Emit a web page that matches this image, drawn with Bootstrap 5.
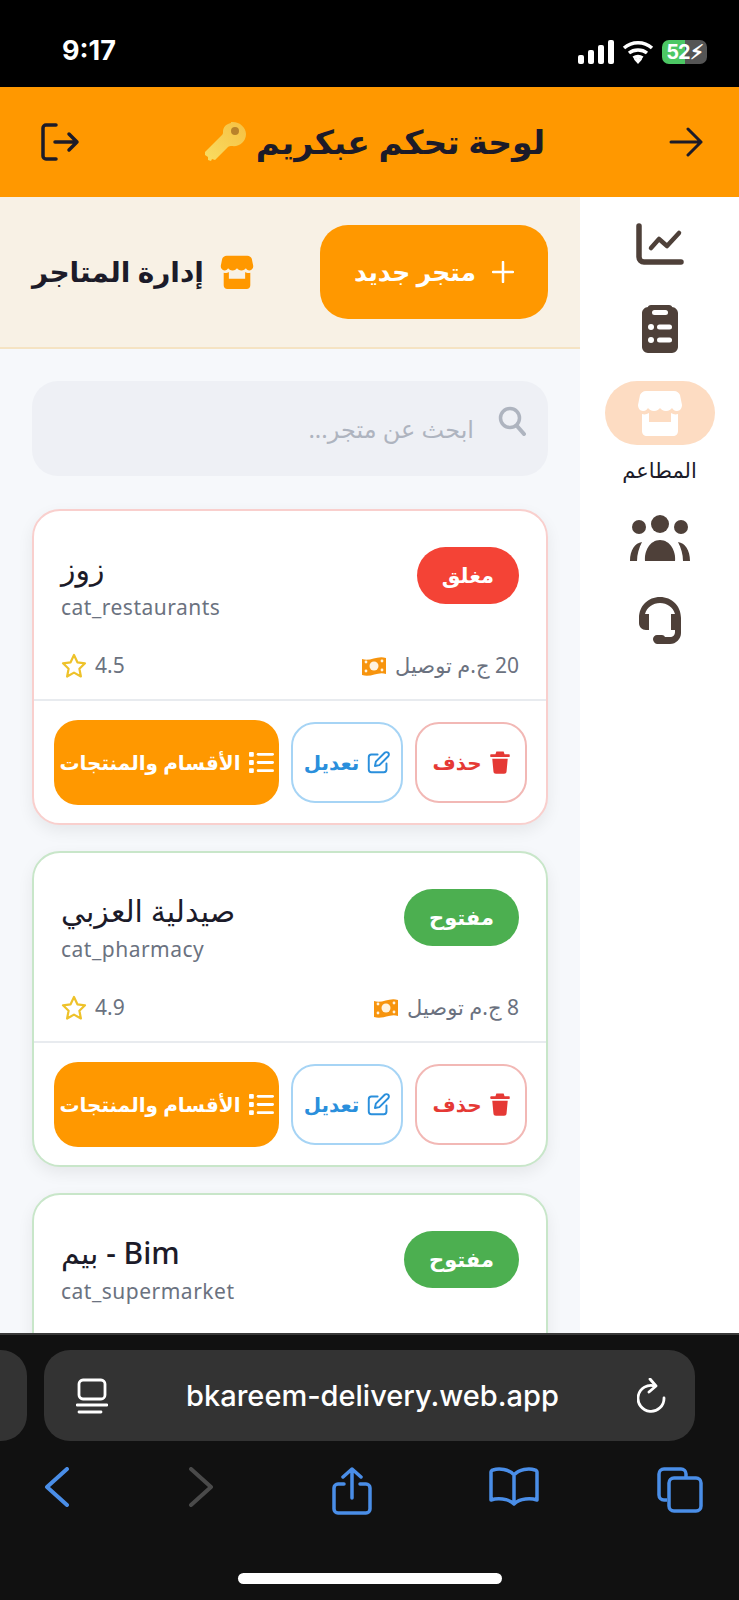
<!DOCTYPE html>
<html lang="ar" dir="rtl">
<head>
    <meta charset="UTF-8">
    <meta name="viewport" content="width=device-width, initial-scale=1.0">
    <title>لوحة تحكم عبكريم</title>
    <link href="https://cdn.jsdelivr.net/npm/bootstrap@5.3.0/dist/css/bootstrap.min.css" rel="stylesheet">
    <style>
        body {
            font-family: "Noto Sans", "DejaVu Sans", sans-serif;
            background: #000;
            color: #1c1b29;
        }
        .phone { width: 739px; height: 1600px; overflow: hidden; }
        .status-bar { height: 87px; background: #000; color: #fff; padding: 0 32px 0 62px; }
        .status-time { font-family: Inter, sans-serif; font-weight: 700; font-size: 27px; }
        .battery { width: 45px; height: 24px; border-radius: 7px; background: linear-gradient(90deg, #4cc764 52%, #555 52%); font: 700 20px/24px Inter, sans-serif; text-align: center; color: #fff; letter-spacing: -1px; }
        .top-bar { height: 110px; background: #ff9800; padding: 0 36px 0 40px; }
        .top-title { font-size: 33px; font-weight: 700; margin: 0; }
        .app-body { height: 1136px; background: #fff; }
        .side-rail { width: 159px; padding-top: 26px; }
        .rail-item { height: 42px; margin-bottom: 40px; color: #4e4039; }
        .rail-pill { width: 110px; height: 64px; border-radius: 32px; background: #fddcc2; color: #fff; }
        .rail-label { font-size: 21px; color: #1c1b29; margin-top: 10px; line-height: 30px; }
        .rail-active { margin-top: -6px; margin-bottom: 30px; height: auto; }
        .store-pane { background: #f6f8fb; overflow: hidden; }
        .store-head { height: 152px; background: #f8f1e5; border-bottom: 2px solid #f5e3c3; padding: 0 32px; }
        .add-btn { width: 228px; height: 94px; border-radius: 28px; background: #ff9800; color: #fff; font-size: 25px; font-weight: 700; border: 0; }
        .store-title { font-size: 28px; font-weight: 700; margin: 0; }
        .search-box { height: 95px; margin: 32px 32px 33px; background: #eef0f5; border-radius: 26px; padding: 0 22px; color: #aeb4bf; font-size: 24px; }
        .store-card { margin: 0 32px 26px; border-radius: 28px; border: 2px solid #c8e6c9; background: #fff; box-shadow: 0 6px 16px rgba(0, 0, 0, .07); flex-shrink: 0; }
        .store-card.closed { border-color: #f9cfcd; }
        .card-top { padding: 36px 27px 0; height: 188px; }
        .state-pill { height: 57px; border-radius: 29px; color: #fff; font-size: 21px; font-weight: 600; padding: 0 25px; }
        .state-open { background: #4caf50; }
        .state-closed { background: #f44336; }
        .store-name { font-size: 30px; line-height: 44px; margin: 0; }
        .store-cat { font-size: 21px; color: #6b7280; letter-spacing: .5px; line-height: 32px; }
        .meta-row { color: #6b7280; font-size: 21px; margin-top: 27px; }
        .card-actions { border-top: 2px solid #e8ebef; padding: 21px 19px 20px; gap: 12px; }
        .act-btn { height: 81px; width: 112px; border-radius: 24px; background: #fff; font-size: 20px; font-weight: 700; padding: 0; }
        .act-del { border: 2px solid #f2b8b5; color: #e53935; }
        .act-edit { border: 2px solid #a6d4f5; color: #2a8fdc; width: 112px; }
        .act-cats { border: 0; background: #ff9800; color: #fff; width: 225px; height: 85px; margin-top: -2px; margin-bottom: -2px; }
        .browser-bar { height: 267px; background: #111; border-top: 2px solid #3a3a3a; color: #fff; }
        .url-row { padding-top: 15px; gap: 17px; }
        .url-stub { width: 27px; height: 91px; background: #333; border-radius: 0 26px 26px 0; }
        .url-box { width: 651px; height: 91px; background: #333; border-radius: 26px; padding: 0 28px 0 32px; font-family: Inter, sans-serif; font-size: 29px; font-weight: 500; }
        .nav-icons { padding: 26px 36px 0 44px; height: 100px; }
        .home-line { width: 264px; height: 11px; border-radius: 6px; background: #fff; margin: 32px auto 0; }
    </style>
</head>
<body>
    <svg width="0" height="0" class="d-block">
        <symbol id="i-store" viewBox="0 0 44 46"><path fill="currentColor" d="M8 1h28c3 0 5 2 6 4l2 10c0 3-2 6-5 6s-4-2-5-3c-1 1-3 3-6 3s-5-2-6-3c-1 1-3 3-6 3s-5-2-6-3c-1 1-2 3-5 3s-5-3-5-6L2 5c1-2 3-4 6-4z"/><path fill="currentColor" d="M4 24c3 1 5 0 7-1v9h22v-9c2 1 4 2 7 1v17c0 3-2 5-5 5H9c-3 0-5-2-5-5z"/></symbol>
        <symbol id="i-star" viewBox="0 0 26 26"><path fill="none" stroke="#eec22a" stroke-width="2.2" stroke-linejoin="round" d="M13 2l3.4 7.3 7.6 1-5.6 5.4 1.5 7.8-6.9-3.9-6.9 3.9 1.5-7.8L2 10.3l7.6-1z"/></symbol>
        <symbol id="i-money" viewBox="0 0 26 22"><path fill="#f7940d" d="M1 4c8 3 15-4 24-1v16c-8-3-15 4-24 1z"/><circle cx="13" cy="11" r="4.5" fill="#fff3df"/><circle cx="5" cy="7" r="1.4" fill="#fff3df"/><circle cx="21" cy="15" r="1.4" fill="#fff3df"/><circle cx="21" cy="6" r="1.4" fill="#fff3df"/><circle cx="5" cy="16" r="1.4" fill="#fff3df"/></symbol>
        <symbol id="i-trash" viewBox="0 0 22 26"><path fill="currentColor" d="M7 1h8l1 3h5c1 0 1 3 0 3H1C0 7 0 4 1 4h5zM2.500 9h17l-1.300 14c-.1 1.500-1.200 2.500-2.700 2.500h-9c-1.500 0-2.600-1-2.700-2.500z"/></symbol>
        <symbol id="i-edit" viewBox="0 0 26 26"><path fill="none" stroke="currentColor" stroke-width="2.200" stroke-linecap="round" stroke-linejoin="round" d="M12 4H5a3 3 0 0 0-3 3v14a3 3 0 0 0 3 3h14a3 3 0 0 0 3-3v-7M9 17l1-5L20 2c1-1 3-1 4 0s1 3 0 4L14 16z"/></symbol>
        <symbol id="i-list" viewBox="0 0 26 24"><g fill="currentColor"><rect x="0" y="1" width="5" height="5" rx="1"/><rect x="0" y="9.500" width="5" height="5" rx="1"/><rect x="0" y="18" width="5" height="5" rx="1"/><rect x="8" y="2" width="18" height="3" rx="1.500"/><rect x="8" y="10.500" width="18" height="3" rx="1.500"/><rect x="8" y="19" width="18" height="3" rx="1.500"/></g></symbol>
    </svg>

    <div class="phone d-flex flex-column">
        <!-- status bar -->
        <div class="status-bar d-flex align-items-center justify-content-between pt-3" dir="ltr">
            <span class="status-time">9:17</span>
            <div class="d-flex align-items-center gap-2">
                <svg width="36" height="24" viewBox="0 0 36 24"><g fill="#fff"><rect x="0" y="15" width="6" height="9" rx="2"/><rect x="10" y="10" width="6" height="14" rx="2"/><rect x="20" y="5" width="6" height="19" rx="2"/><rect x="30" y="0" width="6" height="24" rx="2"/></g></svg>
                <svg width="32" height="24" viewBox="0 0 32 24"><path fill="none" stroke="#fff" stroke-width="3.500" d="M2 8c8-7 20-7 28 0M7 13c5-4 13-4 18 0M11.500 18c3-2 6-2 9 0"/><path fill="#fff" d="M16 24l-4-4.500c2-2 6-2 8 0z"/></svg>
                <div class="battery">52⚡︎</div>
            </div>
        </div>

        <!-- app header -->
        <header class="top-bar d-flex align-items-center justify-content-between">
            <svg width="34" height="30" viewBox="0 0 34 30"><path fill="none" stroke="#1c1b29" stroke-width="3" stroke-linecap="round" stroke-linejoin="round" d="M2 15h30M19 2l13 13-13 13"/></svg>
            <div class="d-flex align-items-center gap-2">
                <h1 class="top-title">لوحة تحكم عبكريم</h1>
                <svg width="44" height="44" viewBox="0 0 44 44">
                    <defs><linearGradient id="keyGold" x1="1" y1="0" x2="0" y2="1"><stop offset="0" stop-color="#f6c042"/><stop offset="1" stop-color="#f9dd62"/></linearGradient></defs>
                    <path fill="url(#keyGold)" d="M27 2c8-1 15 5 15 12 0 8-7 13-14 12-2 0-3 0-4 1L11 40l-3-1-1 2-3-1 0-3-3-2 0-3 17-17c1-1 1-2 1-3 0-5 3-8 8-9z"/>
                    <circle cx="31" cy="11" r="4" fill="#b9822a"/>
                </svg>
            </div>
            <svg width="40" height="40" viewBox="0 0 40 40"><path fill="none" stroke="#1c1b29" stroke-width="3.500" stroke-linecap="round" stroke-linejoin="round" d="M16 3H6a3 3 0 0 0-3 3v28a3 3 0 0 0 3 3h10M15 20h22M29 12l8 8-8 8"/></svg>
        </header>

        <div class="app-body d-flex">
            <!-- side rail -->
            <nav class="side-rail d-flex flex-column align-items-center flex-shrink-0">
                <div class="rail-item">
                    <svg width="48" height="42" viewBox="0 0 48 42"><path fill="none" stroke="currentColor" stroke-width="5.500" stroke-linecap="round" stroke-linejoin="round" d="M3 3v31a5 5 0 0 0 5 5h37"/><path fill="none" stroke="currentColor" stroke-width="4.500" stroke-linecap="round" stroke-linejoin="round" d="M15 25l8-9 8 7 12-13"/></svg>
                </div>
                <div class="rail-item">
                    <svg width="36" height="48" viewBox="0 0 36 48"><path fill="currentColor" d="M9 0h18c2 0 3 1 3 2 3 0 6 3 6 6v34c0 3-3 6-6 6H6c-3 0-6-3-6-6V8c0-3 3-6 6-6 0-1 1-2 3-2z"/><g fill="#fff"><rect x="10" y="5" width="16" height="5" rx="2.500"/><circle cx="9" cy="22" r="3"/><circle cx="9" cy="35" r="3"/><rect x="15" y="19.500" width="15" height="5" rx="2.500"/><rect x="15" y="32.500" width="15" height="5" rx="2.500"/></g></svg>
                </div>
                <div class="rail-item rail-active d-flex flex-column align-items-center">
                    <div class="rail-pill d-flex align-items-center justify-content-center">
                        <svg width="44" height="46"><use href="#i-store"/></svg>
                    </div>
                    <span class="rail-label">المطاعم</span>
                </div>
                <div class="rail-item">
                    <svg width="60" height="46" viewBox="0 0 60 46"><g fill="currentColor"><circle cx="30" cy="9" r="9"/><circle cx="9" cy="12" r="7"/><circle cx="51" cy="12" r="7"/><path d="M15 46c-1-10 5-21 15-21s16 11 15 21z"/><path d="M0 46c0-11 5-18 12-19-3 6-5 12-5 19zM60 46c0-11-5-18-12-19 3 6 5 12 5 19z"/></g></svg>
                </div>
                <div class="rail-item">
                    <svg width="42" height="48" viewBox="0 0 42 48"><g fill="currentColor"><path d="M21 0C9 0 0 9 0 21v5c0 4 3 7 7 7h3V17H6c2-7 8-11 15-11s13 4 15 11h-4v16h4v2c0 3-2 5-5 5h-5c-1-2-3-2-4-2h-4c-2 0-4 2-4 4s2 5 4 5h13c6 0 11-5 11-11V21C42 9 33 0 21 0z"/></g></svg>
                </div>
            </nav>

            <!-- stores -->
            <main class="store-pane flex-grow-1 d-flex flex-column">
                <div class="store-head d-flex align-items-center justify-content-between flex-shrink-0">
                    <button class="add-btn btn d-flex align-items-center justify-content-center gap-3">
                        <svg width="22" height="22" viewBox="0 0 22 22"><path stroke="#fff" stroke-width="2.500" stroke-linecap="round" d="M11 1v20M1 11h20"/></svg>
                        متجر جديد
                    </button>
                    <div class="d-flex align-items-center gap-3">
                        <svg width="34" height="34" style="color:#ff9800"><use href="#i-store"/></svg>
                        <h2 class="store-title">إدارة المتاجر</h2>
                    </div>
                </div>

                <div class="search-box d-flex align-items-center gap-4 flex-shrink-0">
                    <svg width="28" height="30" viewBox="0 0 28 30" class="mb-3"><circle cx="12" cy="12" r="9.500" fill="none" stroke="#aeb4bf" stroke-width="3.500"/><path stroke="#aeb4bf" stroke-width="4" stroke-linecap="round" d="M19 20l7 8"/></svg>
                    <span>ابحث عن متجر...</span>
                </div>

                <article class="store-card closed">
                    <div class="card-top">
                        <div class="d-flex justify-content-between">
                            <span class="state-pill state-closed d-flex align-items-center">مغلق</span>
                            <div class="text-start">
                                <h3 class="store-name">زوز</h3>
                                <div class="store-cat" dir="ltr">cat_restaurants</div>
                            </div>
                        </div>
                        <div class="meta-row d-flex justify-content-between align-items-center">
                            <div class="d-flex align-items-center gap-2"><span>20 ج.م توصيل</span><svg width="26" height="22"><use href="#i-money"/></svg></div>
                            <div class="d-flex align-items-center gap-2" dir="ltr"><svg width="26" height="26"><use href="#i-star"/></svg><span>4.5</span></div>
                        </div>
                    </div>
                    <div class="card-actions d-flex">
                        <button class="act-btn act-del btn d-flex align-items-center justify-content-center gap-2"><svg width="20" height="25"><use href="#i-trash"/></svg>حذف</button>
                        <button class="act-btn act-edit btn d-flex align-items-center justify-content-center gap-2"><svg width="23" height="23"><use href="#i-edit"/></svg>تعديل</button>
                        <button class="act-btn act-cats btn d-flex align-items-center justify-content-center gap-2"><svg width="25" height="23"><use href="#i-list"/></svg>الأقسام والمنتجات</button>
                    </div>
                </article>

                <article class="store-card">
                    <div class="card-top">
                        <div class="d-flex justify-content-between">
                            <span class="state-pill state-open d-flex align-items-center">مفتوح</span>
                            <div class="text-start">
                                <h3 class="store-name">صيدلية العزبي</h3>
                                <div class="store-cat" dir="ltr">cat_pharmacy</div>
                            </div>
                        </div>
                        <div class="meta-row d-flex justify-content-between align-items-center">
                            <div class="d-flex align-items-center gap-2"><span>8 ج.م توصيل</span><svg width="26" height="22"><use href="#i-money"/></svg></div>
                            <div class="d-flex align-items-center gap-2" dir="ltr"><svg width="26" height="26"><use href="#i-star"/></svg><span>4.9</span></div>
                        </div>
                    </div>
                    <div class="card-actions d-flex">
                        <button class="act-btn act-del btn d-flex align-items-center justify-content-center gap-2"><svg width="20" height="25"><use href="#i-trash"/></svg>حذف</button>
                        <button class="act-btn act-edit btn d-flex align-items-center justify-content-center gap-2"><svg width="23" height="23"><use href="#i-edit"/></svg>تعديل</button>
                        <button class="act-btn act-cats btn d-flex align-items-center justify-content-center gap-2"><svg width="25" height="23"><use href="#i-list"/></svg>الأقسام والمنتجات</button>
                    </div>
                </article>

                <article class="store-card">
                    <div class="card-top">
                        <div class="d-flex justify-content-between">
                            <span class="state-pill state-open d-flex align-items-center">مفتوح</span>
                            <div class="text-start">
                                <h3 class="store-name">Bim - بيم</h3>
                                <div class="store-cat" dir="ltr">cat_supermarket</div>
                            </div>
                        </div>
                    </div>
                </article>
            </main>
        </div>

        <!-- browser chrome -->
        <footer class="browser-bar flex-shrink-0" dir="ltr">
            <div class="url-row d-flex">
                <div class="url-stub"></div>
                <div class="url-box d-flex align-items-center justify-content-between">
                    <svg width="32" height="36" viewBox="0 0 32 36"><g fill="none" stroke="#fff" stroke-width="2.800" stroke-linecap="round"><rect x="3" y="2" width="26" height="19" rx="4"/><path d="M1 27h30M3 34h22"/></g></svg>
                    <span>bkareem-delivery.web.app</span>
                    <svg width="30" height="36" viewBox="0 0 30 36"><g fill="none" stroke="#fff" stroke-width="2.800" stroke-linecap="round" stroke-linejoin="round"><path d="M18 8A13 13 0 1 0 27 20"/><path d="M13 1l6 7-7 6"/></g></svg>
                </div>
            </div>
            <div class="nav-icons d-flex justify-content-between align-items-start">
                <svg width="26" height="40" viewBox="0 0 26 40"><path fill="none" stroke="#4a8ee8" stroke-width="4" stroke-linecap="round" stroke-linejoin="round" d="M23 2L3 20l20 18"/></svg>
                <svg width="26" height="40" viewBox="0 0 26 40"><path fill="none" stroke="#4a4a4a" stroke-width="4" stroke-linecap="round" stroke-linejoin="round" d="M3 2l20 18L3 38"/></svg>
                <svg width="40" height="48" viewBox="0 0 40 48"><path fill="none" stroke="#4a8ee8" stroke-width="3.500" stroke-linecap="round" stroke-linejoin="round" d="M12 17H6a4 4 0 0 0-4 4v21a4 4 0 0 0 4 4h28a4 4 0 0 0 4-4V21a4 4 0 0 0-4-4h-6M20 31V2M11 10l9-8 9 8"/></svg>
                <svg width="50" height="40" viewBox="0 0 50 40"><path fill="none" stroke="#4a8ee8" stroke-width="3.500" stroke-linejoin="round" d="M25 8C20 2 10 1 4 3c-1 0-2 1-2 2v28c6-2 17-2 23 4 6-6 17-6 23-4V5c0-1-1-2-2-2-6-2-16-1-21 5zM25 8v28"/></svg>
                <svg width="46" height="46" viewBox="0 0 46 46"><g fill="none" stroke="#4a8ee8" stroke-width="3.500" stroke-linejoin="round"><path d="M10 33H7a5 5 0 0 1-5-5V7a5 5 0 0 1 5-5h17a5 5 0 0 1 5 5v4"/><rect x="12" y="11" width="32" height="33" rx="5"/></g></svg>
            </div>
            <div class="home-line"></div>
        </footer>
    </div>

    <script src="https://cdn.jsdelivr.net/npm/bootstrap@5.3.0/dist/js/bootstrap.bundle.min.js"></script>
</body>
</html>
